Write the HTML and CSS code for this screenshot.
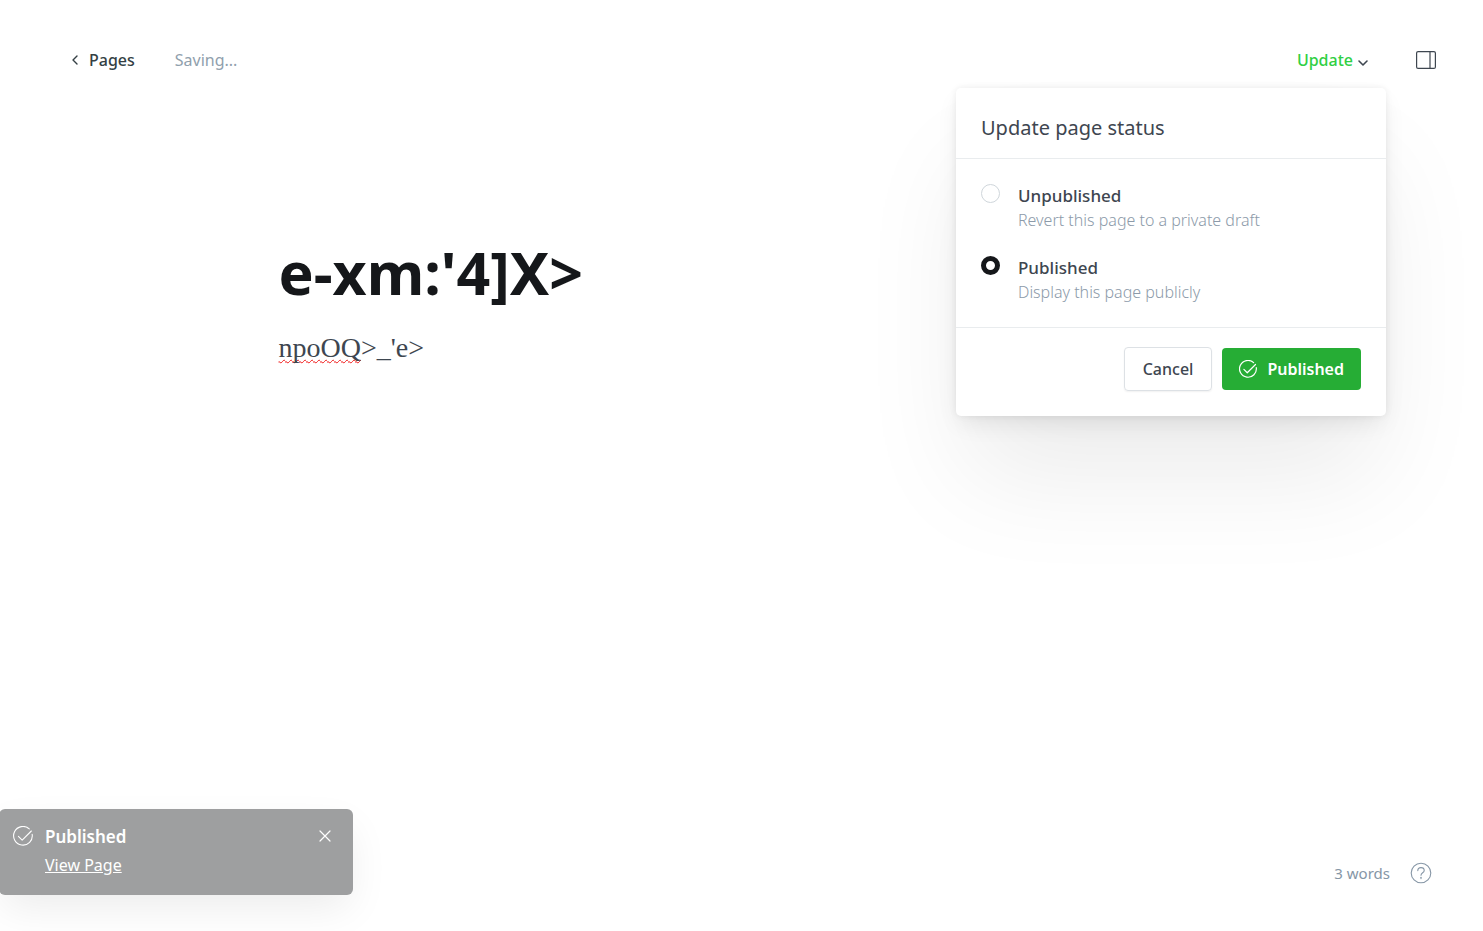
FILE: index.html
```html
<!DOCTYPE html>
<html lang="en">
<head>
<meta charset="utf-8">
<meta name="viewport" content="width=device-width, initial-scale=1">
<title>Page editor</title>
<link rel="stylesheet" href="styles.css">
</head>
<body>
<div class="editor">
  <header class="topbar">
    <nav class="topbar-left">
      <a class="back-link" href="#">
        <svg class="icon-back" viewBox="0 0 8 12" aria-hidden="true"><path d="M6 2 2 6l4 4"/></svg>
        <span>Pages</span>
      </a>
      <span class="save-state">Saving...</span>
    </nav>
    <div class="topbar-right">
      <div class="publish-menu">
        <button class="update-button" type="button" aria-expanded="true">
          <span>Update</span>
          <svg class="icon-down" viewBox="0 0 12 8" aria-hidden="true"><path d="m2 2 4 4 4-4"/></svg>
        </button>
        <form class="dropdown">
          <h2 class="dropdown-title">Update page status</h2>
          <div class="options">
            <div class="option">
              <input class="radio" type="radio" name="status" id="unpublished">
              <label class="option-text" for="unpublished">
                <span class="option-name">Unpublished</span>
                <span class="option-hint">Revert this page to a private draft</span>
              </label>
            </div>
            <div class="option">
              <input class="radio" type="radio" name="status" id="published" checked>
              <label class="option-text" for="published">
                <span class="option-name">Published</span>
                <span class="option-hint">Display this page publicly</span>
              </label>
            </div>
          </div>
          <div class="dropdown-actions">
            <button class="button button-plain" type="button">Cancel</button>
            <button class="button button-green" type="button">
              <svg class="icon-check" viewBox="0 0 24 24" aria-hidden="true"><path d="m6.500 12.500 4.500 4.500L22 6"/><path d="M23 10a11.200 11.200 0 1 1-3.500-6.500"/></svg>
              <span>Published</span>
            </button>
          </div>
        </form>
      </div>
      <button class="icon-button" type="button" aria-label="Settings">
        <svg class="icon-panel" viewBox="0 0 20 18" aria-hidden="true"><rect x=".6" y=".6" width="18.800" height="16.800" rx="1.500"/><path d="M14 .6v16.800"/></svg>
      </button>
    </div>
  </header>

  <main class="content">
    <textarea class="post-title" rows="1" aria-label="Page title" spellcheck="false">e-xm:'4]X&gt;</textarea>
    <div class="post-body" contenteditable="true" role="textbox" aria-label="Page content" spellcheck="false"><p><span class="misspelled">npoOQ</span>&gt;_'e&gt;</p></div>
  </main>

  <footer class="footer">
    <span class="word-count">3 words</span>
    <a class="help-link" href="#" aria-label="Help">
      <svg class="icon-help" viewBox="0 0 22 22" aria-hidden="true"><circle cx="11" cy="11" r="9.800"/><path d="M7.800 8.600c0-1.800 1.400-3 3.200-3s3.200 1.200 3.200 2.900c0 2.300-3.200 2.300-3.200 4.700"/><path d="M11 15.300v1.300"/></svg>
    </a>
  </footer>

  <aside class="toast" role="status">
    <svg class="icon-check icon-toast" viewBox="0 0 24 24" aria-hidden="true"><path d="m6.500 12.500 4.500 4.500L22 6"/><path d="M23 10a11.200 11.200 0 1 1-3.500-6.500"/></svg>
    <div class="toast-text">
      <strong class="toast-title">Published</strong>
      <a class="toast-link" href="#">View Page</a>
    </div>
    <button class="toast-close" type="button" aria-label="Close">
      <svg class="icon-close" viewBox="0 0 12 12" aria-hidden="true"><path d="m1 1 10 10M11 1 1 11"/></svg>
    </button>
  </aside>
</div>
</body>
</html>
```

FILE: styles.css
```css
* {
  box-sizing: border-box;
}

body {
  margin: 0;
  background: #fff;
  color: #3e4650;
  font-family: "Noto Sans", "Open Sans", sans-serif;
  font-size: 16px;
  line-height: 24px;
}

svg {
  display: block;
  flex: none;
  fill: none;
  stroke: currentColor;
  stroke-linecap: round;
  stroke-linejoin: round;
}

button {
  padding: 0;
  border: 0;
  background: none;
  color: inherit;
  font: inherit;
  cursor: pointer;
}

a {
  color: inherit;
}

.editor {
  display: flex;
  flex-direction: column;
  min-height: 100vh;
  overflow: hidden;
}

.topbar {
  display: flex;
  justify-content: space-between;
  align-items: center;
  padding: 48px 47px 0 71px;
}

.topbar-left,
.topbar-right {
  display: flex;
  align-items: center;
}

.topbar-left {
  gap: 40px;
}

.topbar-right {
  gap: 30px;
}

.back-link {
  display: flex;
  align-items: center;
  gap: 10px;
  color: #343f44;
  font-weight: 500;
  text-decoration: none;
}

.icon-back {
  width: 8px;
  height: 12px;
  stroke-width: 1.4;
}

.save-state {
  color: #90a0ad;
}

.publish-menu {
  position: relative;
  padding-right: 17px;
}

.update-button {
  display: flex;
  align-items: center;
  gap: 4px;
  color: #30cf43;
  font-weight: 500;
}

.icon-down {
  width: 12px;
  height: 8px;
  margin-top: 5px;
  color: #3e4650;
  stroke-width: 1.6;
}

.icon-panel {
  width: 20px;
  height: 18px;
  color: #3e4650;
  stroke-width: 1.2;
}

.dropdown {
  position: absolute;
  z-index: 2;
  top: 40px;
  right: 0;
  width: 430px;
  border-radius: 5px;
  background: #fff;
  box-shadow: 0 0 7px rgba(0, 0, 0, 0.07), 0 10px 24px -4px rgba(0, 0, 0, 0.09), 0 70px 110px -10px rgba(0, 0, 0, 0.08);
}

.dropdown-title {
  margin: 0;
  padding: 24px 25px 14px;
  border-bottom: 1px solid #e9ecee;
  font-size: 20px;
  font-weight: 400;
  line-height: 32px;
}

.options {
  display: flex;
  flex-direction: column;
  gap: 24px;
  padding: 25px 25px 23px;
}

.option {
  display: flex;
  gap: 18px;
}

.radio {
  flex: none;
  width: 19px;
  height: 19px;
  margin: 0;
  border: 1px solid #cfd6db;
  border-radius: 50%;
  background: #fff;
  appearance: none;
}

.radio:checked {
  border: 5px solid #15171a;
}

.option-text {
  display: flex;
  flex-direction: column;
}

.option-name {
  font-size: 17px;
  font-weight: 500;
}

.option-hint {
  color: #8c9aa9;
  font-size: 16px;
  font-weight: 300;
}

.dropdown-actions {
  display: flex;
  justify-content: flex-end;
  align-items: center;
  gap: 10px;
  padding: 19px 25px 25px;
  border-top: 1px solid #e9ecee;
}

.button {
  display: flex;
  align-items: center;
  gap: 10px;
  border-radius: 4px;
  font-weight: 500;
}

.button-plain {
  padding: 9px 18px;
  border: 1px solid #dde1e5;
  box-shadow: 0 1px 2px rgba(0, 0, 0, 0.06);
}

.button-green {
  padding: 9px 17px;
  background: #26ad35;
  color: #fff;
  font-weight: 600;
}

.icon-check {
  width: 18px;
  height: 18px;
  stroke-width: 1.6;
}

.content {
  flex: 1;
  width: 100%;
  max-width: 976px;
  margin: 0 auto;
  padding: 160px 25px 0;
}

.post-title {
  display: block;
  width: 100%;
  height: 80px;
  padding: 0;
  border: 0;
  outline: 0;
  overflow: hidden;
  background: transparent;
  color: #15171a;
  font: 700 59px/80px "Noto Sans", "Open Sans", sans-serif;
  resize: none;
}

.post-body {
  margin-top: 16px;
  outline: 0;
  font: 28px/40px "Liberation Serif", serif;
}

.post-body p {
  margin: 0;
}

.misspelled {
  text-decoration: underline wavy #f01818 1px;
  text-decoration-skip-ink: none;
  text-underline-offset: 2px;
}

.footer {
  display: flex;
  justify-content: flex-end;
  align-items: center;
  gap: 20px;
  padding: 0 51px 46px;
  color: #8696a6;
  font-size: 15px;
}

.icon-help {
  width: 22px;
  height: 22px;
  stroke-width: 1.1;
}

.toast {
  position: absolute;
  bottom: 36px;
  left: -1px;
  display: flex;
  align-items: flex-start;
  width: 354px;
  padding: 16px 17px 18px 14px;
  border-radius: 6px;
  background: #9e9fa0;
  color: #fff;
  box-shadow: 0 16px 40px -4px rgba(0, 0, 0, 0.08);
}

.icon-toast {
  width: 20px;
  height: 20px;
  margin-top: 1px;
  stroke-width: 1.3;
}

.toast-text {
  display: flex;
  flex: 1;
  flex-direction: column;
  align-items: flex-start;
  gap: 4px;
  padding-left: 12px;
}

.toast-title {
  font-size: 17px;
  font-weight: 600;
}

.toast-link {
  font-size: 16px;
}

.toast-close {
  padding: 5px;
}

.icon-close {
  width: 12px;
  height: 12px;
  stroke-width: 1.2;
}
```
